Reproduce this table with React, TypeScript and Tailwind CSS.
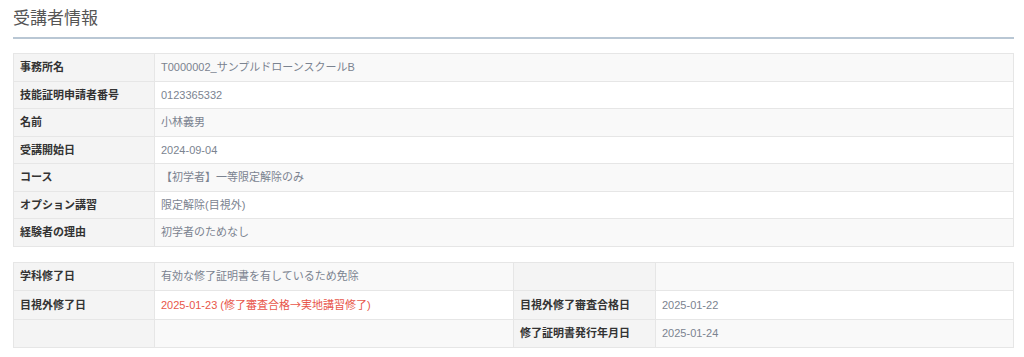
import React from 'react';

type Row = { label: string; value: string };

const studentRows: Row[] = [
  { label: '事務所名', value: 'T0000002_サンプルドローンスクールB' },
  { label: '技能証明申請者番号', value: '0123365332' },
  { label: '名前', value: '小林義男' },
  { label: '受講開始日', value: '2024-09-04' },
  { label: 'コース', value: '【初学者】一等限定解除のみ' },
  { label: 'オプション講習', value: '限定解除(目視外)' },
  { label: '経験者の理由', value: '初学者のためなし' },
];

const th = 'border border-[#e6e6e6] bg-[#f4f4f4] px-[6px] text-left font-bold text-[#333] w-[141px]';
const td = 'border border-[#e6e6e6] px-[6px] text-[#7b8390]';

const App: React.FC = () => {
  return (
    <div
      className="min-h-screen bg-white pl-[13px] pr-[10px] pt-[8px] text-[11px]"
      style={{ fontFamily: '"Liberation Sans", "Noto Sans CJK JP", sans-serif' }}
    >
      {/* Section title */}
      <h2 className="text-[17px] text-[#555] leading-[22px] pb-[7px] border-b-2 border-[#b9c7d4]">受講者情報</h2>

      {/* Basic info */}
      <table className="mt-[14px] w-full border-collapse">
        <tbody>
          {studentRows.map((r, i) => (
            <tr key={r.label} className={`h-[27.5px] ${i % 2 === 0 ? 'bg-[#f9f9f9]' : 'bg-white'}`}>
              <th className={th}>{r.label}</th>
              <td className={td}>{r.value}</td>
            </tr>
          ))}
        </tbody>
      </table>

      {/* Completion dates */}
      <table className="mt-[15px] w-full border-collapse table-fixed">
        <colgroup>
          <col className="w-[141px]" />
          <col className="w-[359px]" />
          <col className="w-[142px]" />
          <col />
        </colgroup>
        <tbody>
          <tr className="h-[28.5px] bg-[#f9f9f9]">
            <th className={th}>学科修了日</th>
            <td className={td}>有効な修了証明書を有しているため免除</td>
            <th className={th}></th>
            <td className={td}></td>
          </tr>
          <tr className="h-[28.5px] bg-white">
            <th className={th}>目視外修了日</th>
            <td className="border border-[#e6e6e6] px-[6px] text-[#e8564a]">
              2025-01-23 (修了審査合格<span style={{ fontFamily: '"Noto Sans CJK JP", sans-serif' }}>→</span>実地講習修了)
            </td>
            <th className={th}>目視外修了審査合格日</th>
            <td className={td}>2025-01-22</td>
          </tr>
          <tr className="h-[28.5px] bg-[#f9f9f9]">
            <th className={th}></th>
            <td className={td}></td>
            <th className={th}>修了証明書発行年月日</th>
            <td className={td}>2025-01-24</td>
          </tr>
        </tbody>
      </table>
    </div>
  );
};

export default App;
